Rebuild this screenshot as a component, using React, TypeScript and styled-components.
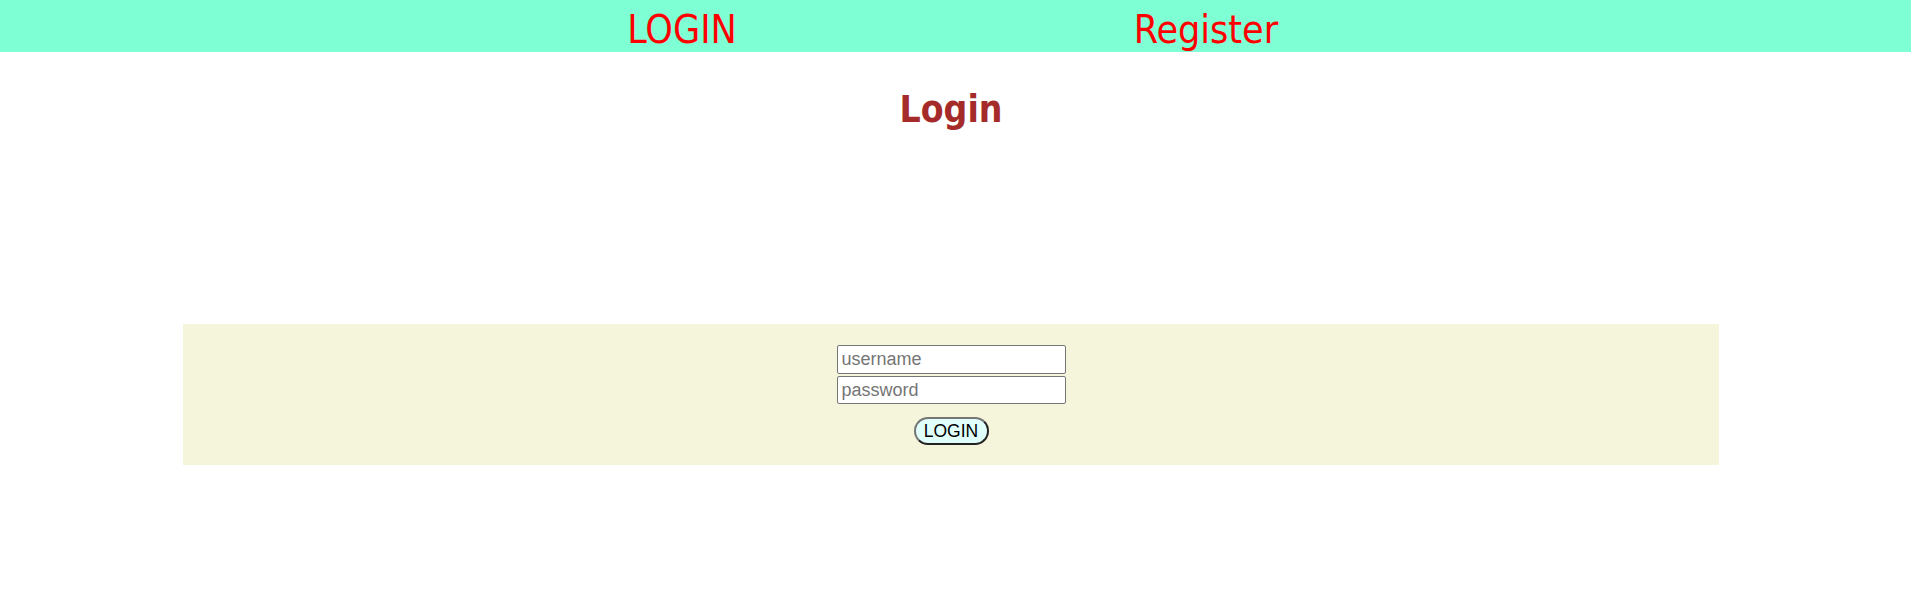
import React from "react";
import styled, { createGlobalStyle } from "styled-components";

const GlobalStyle = createGlobalStyle`
  html, body {
    margin: 0;
    padding: 0;
    background: #ffffff;
  }
  body {
    font-family: "Liberation Sans", Arial, sans-serif;
  }
`;

const NavBar = styled.nav`
  height: 52px;
  background: #7fffd4;
  display: flex;
  justify-content: center;
  padding-right: 23px;
  box-sizing: border-box;
`;

const NavItem = styled.a`
  width: 524px;
  text-align: center;
  padding-top: 10px;
  font-family: "DejaVu Sans Condensed", "DejaVu Sans", sans-serif;
  font-stretch: condensed;
  font-size: 39px;
  line-height: 39px;
  color: #ff0000;
  text-decoration: none;
  cursor: pointer;
`;

const Main = styled.main`
  margin: 0 192px 0 183px;
  display: flex;
  flex-direction: column;
  align-items: center;
`;

const Title = styled.h1`
  margin: 39px 0 0;
  font-family: "DejaVu Sans Condensed", "DejaVu Sans", sans-serif;
  font-stretch: condensed;
  font-weight: 700;
  font-size: 37px;
  line-height: 37px;
  color: #a52a2a;
`;

const Panel = styled.form`
  align-self: stretch;
  margin-top: 196px;
  background: #f5f5dc;
  padding: 21px 0 20px;
  display: flex;
  flex-direction: column;
  align-items: center;
`;

const Field = styled.input<{ $h: number }>`
  box-sizing: border-box;
  width: 229px;
  height: ${(p) => p.$h}px;
  margin: 0;
  padding: 0 4px;
  border: 1px solid #767676;
  border-radius: 2px;
  background: #ffffff;
  font-family: "Liberation Sans", Arial, sans-serif;
  font-size: 18px;
  color: #000;
  & + & {
    margin-top: 2px;
  }
  &::placeholder {
    color: #757575;
  }
`;

const SubmitButton = styled.button`
  box-sizing: border-box;
  margin-top: 13px;
  width: 75px;
  height: 28px;
  padding: 0;
  border: 2px solid;
  border-color: #767676 #222222 #222222 #767676;
  border-radius: 14px;
  background: #e0fffa;
  font-family: "Liberation Sans", Arial, sans-serif;
  font-size: 17.5px;
  color: #000;
  cursor: pointer;
`;

export default function App() {
  return (
    <>
      <GlobalStyle />
      <NavBar>
        <NavItem>LOGIN</NavItem>
        <NavItem>Register</NavItem>
      </NavBar>
      <Main>
        <Title>Login</Title>
        <Panel onSubmit={(e) => e.preventDefault()}>
          <Field $h={29} type="text" placeholder="username" />
          <Field $h={28} type="password" placeholder="password" />
          <SubmitButton type="submit">LOGIN</SubmitButton>
        </Panel>
      </Main>
    </>
  );
}
